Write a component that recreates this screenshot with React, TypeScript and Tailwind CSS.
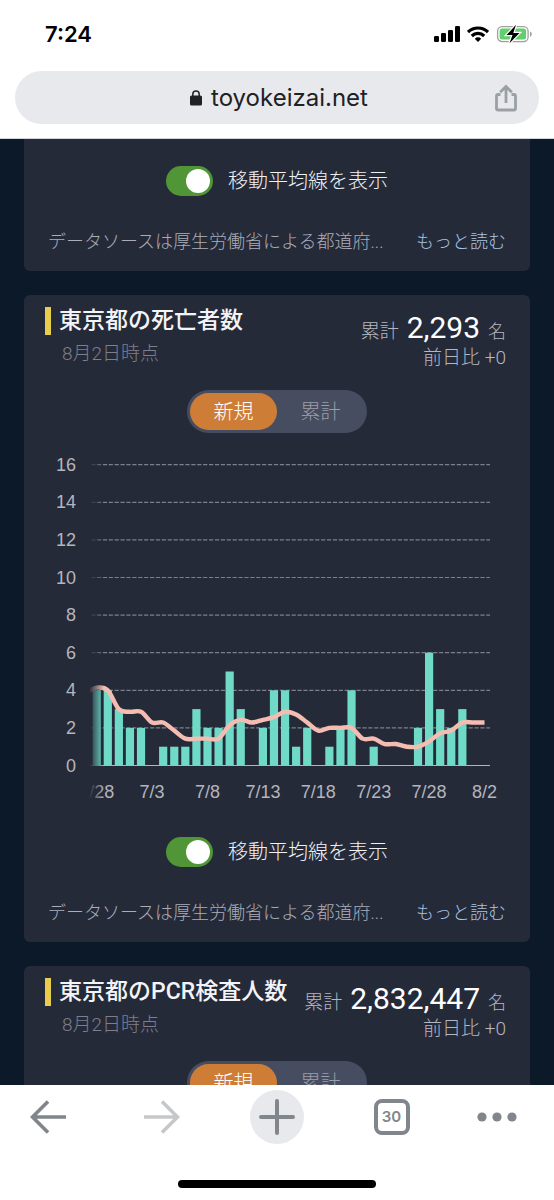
import { useId, useState } from "react";

const DAILY = [
  4, 4, 3, 2, 2, 0, 1, 1, 1, 3, 2, 2, 5, 3, 0, 2, 4, 4, 1, 2, 0, 1, 2, 4, 0, 1, 0, 0, 0, 2, 6, 3, 2, 3, 0, 0,
];

// weekly totals ending on each day, starting one day before DAILY
const WEEKLY = [
  27, 29, 28, 21, 20, 20, 16, 16, 13, 10, 10, 10, 10, 15, 17, 16, 17, 18, 20, 19, 16, 13, 14, 14, 14, 10, 10, 8, 8, 7, 7,
  9, 12, 13, 16, 16, 16,
];

const X_LABELS = ["6/28", "7/3", "7/8", "7/13", "7/18", "7/23", "7/28", "8/2"];
const Y_TICKS = [0, 2, 4, 6, 8, 10, 12, 14, 16];

const STEP = 11.08;
const xAt = (i: number) => 72.7 + i * STEP;
const yAt = (v: number) => 325.5 - v * 18.8;

// cardinal spline through all points
function linePath(points: [number, number][]) {
  const at = (i: number) => points[Math.max(0, Math.min(points.length - 1, i))];
  let d = `M${points[0][0]},${points[0][1]}`;
  for (let i = 1; i < points.length; i++) {
    const [x0, y0] = at(i - 1);
    const [x1, y1] = at(i);
    const before = at(i - 2);
    const after = at(i + 1);
    d += `C${x0 + (x1 - before[0]) / 6},${y0 + (y1 - before[1]) / 6}`;
    d += ` ${x1 - (after[0] - x0) / 6},${y1 - (after[1] - y0) / 6} ${x1},${y1}`;
  }
  return d;
}

function Chart({ showAverage }: { showAverage: boolean }) {
  const points = WEEKLY.map((v, i): [number, number] => [xAt(i - 1), yAt(v / 7)]);
  return (
    <svg viewBox="0 0 506 369" className="mt-[7px] block w-full font-['Liberation_Sans',sans-serif] text-[18px] font-normal">
      <defs>
        <linearGradient id="fade" x1="0" x2="1" y1="0" y2="0">
          <stop offset="0" stopColor="#252a39" />
          <stop offset="1" stopColor="#252a39" stopOpacity="0" />
        </linearGradient>
        <clipPath id="plot">
          <rect x="66" y="0" width="440" height="369" />
        </clipPath>
      </defs>
      {Y_TICKS.map((t) => (
        <g key={t}>
          <text x="52" y={yAt(t) + 6} textAnchor="end" fill="#b4b5be">
            {t}
          </text>
          {t > 0 && (
            <line x1="67" x2="466" y1={yAt(t)} y2={yAt(t)} stroke="#7d808b" strokeWidth="1.2" strokeDasharray="4.2 1.7" />
          )}
        </g>
      ))}
      <g clipPath="url(#plot)">
        {DAILY.map((v, i) => (
          <rect key={i} x={xAt(i) - 4.1} y={yAt(v)} width="8.2" height={v * 18.8} fill="#6fdac8" />
        ))}
        <line x1="66" x2="466" y1="325.5" y2="325.5" stroke="#b4b5bb" strokeWidth="1.2" />
        {showAverage && <path d={linePath(points)} fill="none" stroke="#f5bdb2" strokeWidth="4.4" />}
        {X_LABELS.map((label, i) => (
          <text key={label} x={xAt(i * 5)} y="358" textAnchor="middle" fill="#b4b5be">
            {label}
          </text>
        ))}
        <rect x="65" y="0" width="15" height="369" fill="url(#fade)" />
      </g>
    </svg>
  );
}

function CardHeader({ title, total }: { title: string; total: string }) {
  return (
    <div className="flex items-start justify-between pt-3 pr-6 pl-[21px] whitespace-nowrap">
      <div>
        <h2 className="flex h-7 items-center gap-2 text-[23px] font-medium text-[#f3f4f8]">
          <span className="h-7 w-1.5 bg-[#e8cc4b]" />
          {title}
        </h2>
        <p className="mt-[5px] pl-[17px] text-[19px] leading-7 text-[#7d7f8d]">8月2日時点</p>
      </div>
      <div className="mt-[5px] text-right text-[19px] text-[#b4b6c1]">
        <p className="flex h-8 items-baseline justify-end gap-2 leading-8">
          累計 <strong className="text-[30px] leading-8 font-normal text-white">{total}</strong>
          <span className="text-[18px]">名</span>
        </p>
        <p className="leading-7">前日比 +0</p>
      </div>
    </div>
  );
}

function ModeSwitch() {
  const [mode, setMode] = useState("新規");
  return (
    <div className="mx-auto mt-[18px] flex h-[43px] w-[180px] rounded-full bg-[#474d60] p-[3px]">
      {["新規", "累計"].map((m) => (
        <button
          key={m}
          type="button"
          aria-pressed={mode === m}
          onClick={() => setMode(m)}
          className={
            mode === m
              ? "flex-1 rounded-full bg-[#ce7d37] text-[20px] leading-6 text-white"
              : "flex-1 rounded-full text-[20px] leading-6 text-[#9b9da8]"
          }
        >
          {m}
        </button>
      ))}
    </div>
  );
}

function CardFooter({ checked, onChange }: { checked: boolean; onChange: (v: boolean) => void }) {
  const id = useId();
  return (
    <>
      <div className="flex h-[30px] items-center justify-center gap-[15px]">
        <input
          id={id}
          type="checkbox"
          role="switch"
          checked={checked}
          onChange={(e) => onChange(e.target.checked)}
          className="flex h-[30px] w-[47px] appearance-none items-center rounded-full bg-[#5c6070] px-[3px] before:size-6 before:rounded-full before:bg-white checked:justify-end checked:bg-[#519636]"
        />
        <label htmlFor={id} className="text-[20px] leading-7 text-[#f0f1f5]">
          移動平均線を表示
        </label>
      </div>
      <div className="mt-8 flex justify-between px-6 pb-[15px] text-[18px] leading-7 whitespace-nowrap">
        <p className="text-[#abadb8]">データソースは厚生労働省による都道府...</p>
        <a href="#more" className="text-[#a6c4e6]">
          もっと読む
        </a>
      </div>
    </>
  );
}

function StatusIcons() {
  return (
    <div className="flex items-center gap-[7px]">
      <svg width="26" height="16" viewBox="0 0 26 16">
        <rect x="0" y="10" width="5" height="6" rx="1.3" />
        <rect x="7" y="7" width="5" height="9" rx="1.3" />
        <rect x="14" y="4" width="5" height="12" rx="1.3" />
        <rect x="21" y="0" width="5" height="16" rx="1.3" />
      </svg>
      <svg width="22" height="16" viewBox="0 0 22 16" fill="none" stroke="#000" strokeWidth="3.2">
        <path d="M1 6.1A14.2 14.2 0 0 1 21 6.1" />
        <path d="M4.8 10A8.800 8.800 0 0 1 17.200 10" />
        <path d="M11 16l-3.200-3.300a4.500 4.500 0 0 1 6.400 0z" fill="#000" stroke="none" />
      </svg>
      <svg width="37" height="20" viewBox="0 0 37 20">
        <rect x="1.600" y="2.600" width="30.500" height="15" rx="4.500" fill="none" stroke="#a0a0a2" strokeWidth="1.300" />
        <rect x="3.600" y="4.600" width="26.500" height="11" rx="2.500" fill="#63ce6c" />
        <path d="M34 7.500c2.400 1 2.400 4.200 0 5.200z" fill="#a0a0a2" />
        <path d="M20 .8L10.500 11h6L13.500 19.200 23.500 8.900h-6.200z" stroke="#fff" strokeWidth="2.400" paintOrder="stroke" />
      </svg>
    </div>
  );
}

function BrowserHeader() {
  return (
    <header className="shrink-0 border-b border-[#d3d5d9] bg-white px-[15px] pb-[14px] font-[Inter,sans-serif] font-normal">
      <div className="flex h-[71px] items-center justify-between pr-1.5 pb-1 pl-[30px]">
        <time className="text-[22px] leading-7 font-semibold text-black">7:24</time>
        <StatusIcons />
      </div>
      <div className="relative flex h-[53px] items-center justify-center rounded-full bg-[#e8e9ed]">
        <button type="button" className="flex items-center gap-[9px] pl-1 text-[24px] leading-8 text-[#202124]">
          <svg width="12" height="16" viewBox="0 0 12 16" fill="#202124">
            <rect x="0" y="5.500" width="12" height="10" rx="1.600" />
            <path d="M2.800 7V4.300a3.200 3.200 0 0 1 6.400 0V7" fill="none" stroke="#202124" strokeWidth="1.500" />
          </svg>
          toyokeizai.net
        </button>
        <button type="button" aria-label="共有" className="absolute right-[22px]">
          <svg width="22" height="28" viewBox="0 0 22 28" fill="none" stroke="#9aa0a6" strokeWidth="2.800">
            <path d="M5.500 10.500H3.300a1.800 1.800 0 0 0-1.800 1.800v11.900a1.800 1.800 0 0 0 1.800 1.800h15.400a1.800 1.800 0 0 0 1.800-1.800V12.300a1.800 1.800 0 0 0-1.800-1.800H16.500" />
            <path d="M11 19V3M5.200 8.200L11 2.400l5.800 5.800" />
          </svg>
        </button>
      </div>
    </header>
  );
}

function BrowserToolbar() {
  return (
    <footer className="h-[115px] shrink-0 bg-white pt-[5px]">
      <nav className="grid h-[54px] grid-cols-[95fr_133fr_98fr_131fr_79fr] place-items-center pr-[18px]">
        <button type="button" aria-label="戻る">
          <svg width="36" height="34" viewBox="0 0 36 34" fill="none" stroke="#80868b" strokeWidth="3.600">
            <path d="M18 1.500L2.500 17 18 32.500M2.500 17H36" />
          </svg>
        </button>
        <button type="button" aria-label="進む">
          <svg width="36" height="34" viewBox="0 0 36 34" fill="none" stroke="#c5c7c9" strokeWidth="3.600">
            <path d="M18 1.500L33.500 17 18 32.500M33.500 17H0" />
          </svg>
        </button>
        <button type="button" aria-label="新しいタブ" className="grid size-[54px] place-items-center rounded-full bg-[#e8e9ed]">
          <svg width="36" height="36" viewBox="0 0 36 36" stroke="#80868b" strokeWidth="4" strokeLinecap="round">
            <path d="M18 2v32M2 18h32" />
          </svg>
        </button>
        <button
          type="button"
          aria-label="タブ 30"
          className="grid size-9 place-items-center rounded-lg border-4 border-[#80868b] font-[Inter,sans-serif] text-[15px] leading-5 font-semibold text-[#80868b]"
        >
          30
        </button>
        <button type="button" aria-label="メニュー">
          <svg width="40" height="10" viewBox="0 0 40 10" fill="#80868b">
            <circle cx="5" cy="5" r="4.600" />
            <circle cx="20" cy="5" r="4.600" />
            <circle cx="35" cy="5" r="4.600" />
          </svg>
        </button>
      </nav>
      <div className="mx-auto mt-9 h-2 w-[198px] rounded-full bg-black" />
    </footer>
  );
}

export default function App() {
  const [casesAverage, setCasesAverage] = useState(true);
  const [deathsAverage, setDeathsAverage] = useState(true);

  return (
    <div className="flex h-screen flex-col font-[Roboto,'Noto_Sans_CJK_JP',sans-serif] font-light">
      <BrowserHeader />
      <main className="flex min-h-0 flex-1 flex-col gap-6 overflow-hidden bg-[#0b1929] px-6">
        <section className="shrink-0 rounded-b-md bg-[#252a39] pt-[27px]">
          <CardFooter checked={casesAverage} onChange={setCasesAverage} />
        </section>
        <section className="shrink-0 rounded-md bg-[#252a39]">
          <CardHeader title="東京都の死亡者数" total="2,293" />
          <ModeSwitch />
          <Chart showAverage={deathsAverage} />
          <div className="mt-7">
            <CardFooter checked={deathsAverage} onChange={setDeathsAverage} />
          </div>
        </section>
        <section className="shrink-0 rounded-md bg-[#252a39] pb-6">
          <CardHeader title="東京都のPCR検査人数" total="2,832,447" />
          <ModeSwitch />
        </section>
      </main>
      <BrowserToolbar />
    </div>
  );
}
